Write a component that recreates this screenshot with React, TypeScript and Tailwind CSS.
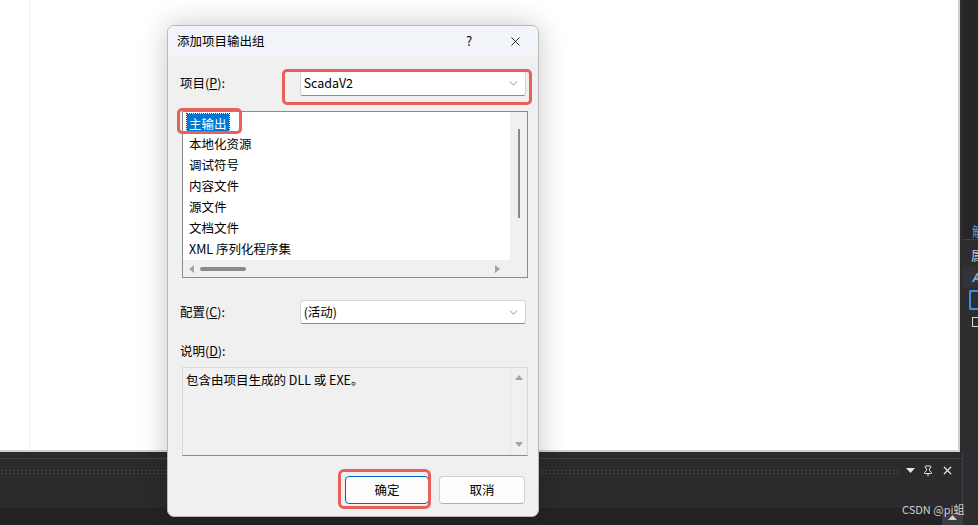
import { X, ChevronDown, Pin } from "lucide-react";

const items = ["主输出", "本地化资源", "调试符号", "内容文件", "源文件", "文档文件", "XML 序列化程序集"];

function Tri({ dir }: { dir: "up" | "down" | "left" | "right" }) {
  const pts = {
    up: "0,6 4,1 8,6",
    down: "0,1 4,6 8,1",
    left: "6,0 1,4 6,8",
    right: "1,0 6,4 1,8",
  }[dir];
  return (
    <svg width="8" height="8" viewBox="0 0 8 8">
      <polygon points={pts} fill="#a3a3a3" />
    </svg>
  );
}

function Combo({ text, h }: { text: string; h: string }) {
  return (
    <div className={`flex ${h} w-[227px] items-center rounded-[3px] border border-[#d6d6d6] border-b-[#8a8a8a] bg-white pl-[3px] pr-[5px]`}>
      <span className="flex-1 text-[12.5px] text-black">{text}</span>
      <ChevronDown className="h-[13px] w-[13px] text-[#555]" strokeWidth={1.2} />
    </div>
  );
}

export default function App() {
  return (
    <div className="relative h-[525px] w-[978px] overflow-hidden bg-[#2b2b2e] font-['Noto_Sans_CJK_SC','Noto_Sans',sans-serif]">
      {/* editor + right dock */}
      <div className="flex h-[452px]">
        <div className="flex h-[452px] w-[960px] border-b-2 border-r-2 border-[#d2d2d2] bg-white">
          <div className="ml-[29px] w-px bg-[#e6eef6]" />
        </div>
        <div className="flex w-[18px] flex-col bg-[#2d2d30] pl-[3px]">
          <div className="flex h-[240px] items-end border-b border-[#3f3f46] bg-[#252526] pb-[2px] pl-[9px] text-[13px] leading-none text-[#3c9cf0]">解</div>
          <div className="mt-[4px] flex h-[22px] items-center bg-[#2d2d30] pl-[8px] text-[13px] text-[#c8c8c8]">属</div>
          <div className="flex h-[22px] items-center bg-[#333337] pl-[9px] text-[12px] font-bold italic text-[#75b5ee]">A</div>
          <div className="mt-[2px] ml-[6px] h-[20px] w-[10px] rounded-l-[2px] border-2 border-r-0 border-[#3c8ce8]" />
          <div className="mt-[7px] ml-[9px] h-[10px] w-[9px] border border-r-0 border-[#d8d8d8]" />
        </div>
      </div>

      {/* bottom tool window strip */}
      <div className="flex">
        <div className="w-[962px]">
          <div className="mt-[6px] h-px bg-[#3f3f46]" />
          <div className="flex h-[49px] items-start">
            <div className="mt-[10px] h-[6px] flex-1 bg-[radial-gradient(circle,#444448_0.8px,transparent_1px)] bg-[length:4px_3px]" />
            <div className="ml-[6px] flex items-center gap-[7px] pt-[5px] pr-[8px] text-[#e6e6e6]">
              <svg width="9" height="6" viewBox="0 0 9 6"><polygon points="0,0 9,0 4.5,5" fill="#e6e6e6" /></svg>
              <Pin className="h-[12px] w-[12px]" strokeWidth={2} />
              <X className="h-[13px] w-[13px]" strokeWidth={2.2} />
            </div>
          </div>
          <div className="flex h-[17px] justify-end bg-[#232325]">
            <div className="mt-[5px] flex w-[20px] justify-center bg-[#3e3e42] pt-[2px]">
              <svg width="9" height="6" viewBox="0 0 9 6"><polygon points="0,5 4.5,0 9,5" fill="#cfcfcf" /></svg>
            </div>
          </div>
        </div>
        <div className="w-px bg-[#3f3f46]" />
        <div className="flex-1 bg-[#2d2d30]" />
      </div>

      {/* watermark */}
      <div className="absolute left-[902px] top-[501px] text-[11px] text-[#d0d0d0]">CSDN @pi蛆</div>

      {/* dialog */}
      <div className="absolute left-[167px] top-[25px] flex h-[492px] w-[372px] flex-col overflow-hidden rounded-[7px] border border-[#b9b9b9] bg-[#f0f0f0] shadow-[0_0_28px_rgba(0,0,0,0.22)]">
        <div className="flex h-[30px] items-center bg-[#f1f5f9] text-[12.5px] text-black">
          <span className="flex-1 pl-[9px]">添加项目输出组</span>
          <span className="w-[46px] text-center text-[13px]">?</span>
          <span className="flex w-[46px] justify-center">
            <X className="h-[15px] w-[15px]" strokeWidth={1.3} />
          </span>
        </div>

        <div className="flex flex-col px-[12px] text-[12.5px] text-black">
          <div className="relative mt-[15px] flex h-[25px] items-center">
            <span className="w-[120px]">项目(<u>P</u>):</span>
            <Combo text="ScadaV2" h="h-[25px]" />
            <div className="absolute left-[102px] top-[-2px] h-[36px] w-[250px] rounded-[5px] border-[3px] border-[#e8605b]" />
          </div>

          {/* list box */}
          <div className="relative ml-[2px] mt-[15px] flex h-[167px] w-[346px] flex-col border border-[#8c8c8c] bg-white">
            <div className="flex flex-1">
              <div className="flex flex-1 flex-col pl-[4px] pt-[1px]">
                {items.map((it, i) => (
                  <div key={it} className="flex h-[21px] items-center">
                    <span
                      className={
                        i === 0
                          ? "bg-[#0078d7] px-[2px] leading-[19px] text-white outline-1 outline-dotted outline-[#333]"
                          : "px-[2px]"
                      }
                    >
                      {it}
                    </span>
                  </div>
                ))}
              </div>
              <div className="flex w-[17px] justify-center bg-[#f0f0f0] pt-[17px]">
                <div className="h-[89px] w-[2px] bg-[#888]" />
              </div>
            </div>
            <div className="flex h-[17px] items-center bg-[#f0f0f0] px-[5px]">
              <Tri dir="left" />
              <div className="ml-[4px] h-[4px] w-[46px] rounded-full bg-[#8a8a8a]" />
              <div className="flex-1" />
              <Tri dir="right" />
              <div className="w-[20px]" />
            </div>
            <div className="absolute left-[-6px] top-[-4px] h-[26px] w-[65px] rounded-[5px] border-[3px] border-[#e8605b]" />
          </div>

          <div className="mt-[22px] flex h-[24px] items-center">
            <span className="w-[120px]">配置(<u>C</u>):</span>
            <Combo text="(活动)" h="h-[24px]" />
          </div>

          <div className="mt-[19px] leading-[16px]">说明(<u>D</u>):</div>

          <div className="ml-[2px] mt-[8px] flex h-[89px] w-[346px] border border-[#dadada] border-b-[#8a8a8a] bg-[#f0f0f0]">
            <div className="flex-1 pl-[3px] pt-[3px]">包含由项目生成的 DLL 或 EXE。</div>
            <div className="flex w-[17px] flex-col items-center justify-between border-l border-[#e6e6e6] py-[6px]">
              <Tri dir="up" />
              <Tri dir="down" />
            </div>
          </div>

          <div className="mt-[20px] flex justify-end gap-[10px] pr-px">
            <div className="relative">
              <button className="h-[28px] w-[84px] rounded-[4px] border border-[#0067c0] bg-[#fdfdfd] text-[12.5px]">确定</button>
              <div className="absolute left-[-7px] top-[-7px] h-[40px] w-[93px] rounded-[6px] border-[3px] border-[#e8605b]" />
            </div>
            <button className="h-[28px] w-[86px] rounded-[4px] border border-[#d0d0d0] border-b-[#b0b0b0] bg-[#fdfdfd] text-[12.5px]">取消</button>
          </div>
        </div>
      </div>
    </div>
  );
}
